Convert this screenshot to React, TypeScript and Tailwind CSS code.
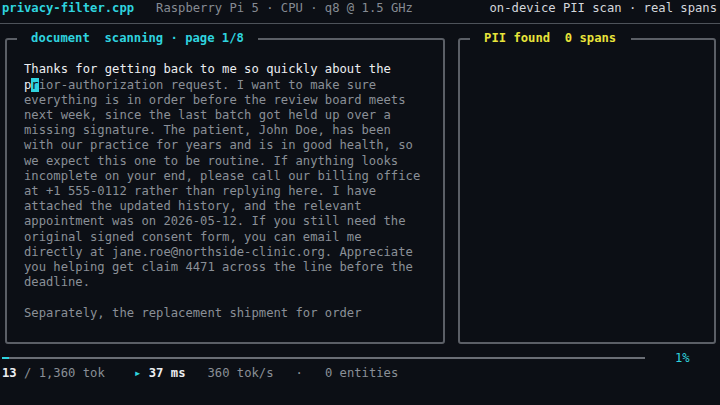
import React from "react";

const BODY_LINES = [
  "everything is in order before the review board meets",
  "next week, since the last batch got held up over a",
  "missing signature. The patient, John Doe, has been",
  "with our practice for years and is in good health, so",
  "we expect this one to be routine. If anything looks",
  "incomplete on your end, please call our billing office",
  "at +1 555-0112 rather than replying here. I have",
  "attached the updated history, and the relevant",
  "appointment was on 2026-05-12. If you still need the",
  "original signed consent form, you can email me",
  "directly at jane.roe@northside-clinic.org. Appreciate",
  "you helping get claim 4471 across the line before the",
  "deadline.",
  " ",
  "Separately, the replacement shipment for order",
];

const PROGRESS = 1; // percent scanned

function Panel({
  title,
  titleClass,
  className = "",
  children,
}: {
  title: string;
  titleClass: string;
  className?: string;
  children?: React.ReactNode;
}) {
  return (
    <div className={`relative h-full rounded-[3px] border-2 border-[#5b5f66] ${className}`}>
      <span
        className={`absolute left-[9.6px] top-[-8.6px] whitespace-pre bg-[#0c0f15] px-[14.5px] font-bold ${titleClass}`}
      >
        {title}
      </span>
      {children}
    </div>
  );
}

export default function App() {
  return (
    <div
      className="h-[405px] w-[720px] overflow-hidden bg-[#0c0f15] px-[2px] pt-[1px] text-[12.2px] leading-[15.2px] text-[#8a8f97]"
      style={{ fontFamily: '"DejaVu Sans Mono", "Liberation Mono", monospace' }}
    >
      {/* header */}
      <div className="flex h-[15.2px] justify-between whitespace-pre pr-[1px]">
        <div>
          <span className="font-bold text-[#2fd3df]">privacy-filter.cpp</span>
          <span className="text-[#868b93]">{"   Raspberry Pi 5 · CPU · q8 @ 1.5 GHz"}</span>
        </div>
        <div className="text-[#d4d7dc]">on-device PII scan · real spans</div>
      </div>
      <div className="-mx-[2px] flex h-[15.2px] items-center">
        <div className="h-[1px] w-full bg-[#4e535a]" />
      </div>

      {/* panels */}
      <div className="ml-[3px] mt-[6.6px] flex h-[306px] gap-[13px]">
        <Panel title="document  scanning · page 1/8" titleClass="text-[#2fd3df]" className="w-[440px]">
          <div className="whitespace-pre pl-[17px] pt-[22.4px]">
            <div className="text-[#eceef1]">Thanks for getting back to me so quickly about the</div>
            <div>
              <span className="text-[#eceef1]">p</span>
              <span className="bg-[#2fd3df] text-[#0c0f15]">r</span>
              ior-authorization request. I want to make sure
            </div>
            {BODY_LINES.map((line, i) => (
              <div key={i}>{line}</div>
            ))}
          </div>
        </Panel>
        <Panel title="PII found  0 spans" titleClass="text-[#e8e43a]" className="w-[258px]" />
      </div>

      {/* progress */}
      <div className="mt-[6.6px] flex h-[15.2px] items-center">
        <div className="h-[2px] w-[643px] bg-[#6a6e75]">
          <div className="h-full bg-[#2fd3df]" style={{ width: `${Math.max(PROGRESS, 1) * 7}px` }} />
        </div>
        <span className="ml-[30px] text-[#2fd3df]">{PROGRESS}%</span>
      </div>

      {/* status */}
      <div className="h-[15.2px] whitespace-pre">
        <span className="font-bold text-[#eceef1]">13</span>
        <span>{" / 1,360 tok    "}</span>
        <span className="text-[#2fd3df]">▸</span>
        <span> </span>
        <span className="font-bold text-[#eceef1]">37 ms</span>
        <span>{"   360 tok/s   ·   0 entities"}</span>
      </div>
    </div>
  );
}
